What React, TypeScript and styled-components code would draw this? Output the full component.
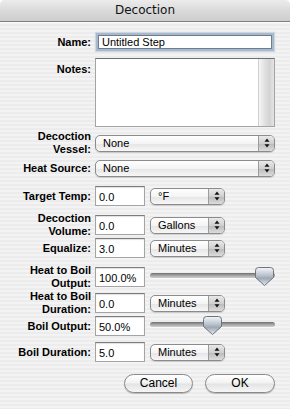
import React from 'react';
import styled, { createGlobalStyle } from 'styled-components';

const GlobalStyle = createGlobalStyle`
  html, body {
    margin: 0;
    padding: 0;
    background: #ffffff;
  }
  body {
    font-family: "Liberation Sans", Arial, sans-serif;
  }
  * {
    box-sizing: border-box;
  }
`;

const Window = styled.div`
  width: 290px;
  height: 409px;
  display: flex;
  flex-direction: column;
  overflow: hidden;
  border-radius: 5px 5px 0 0;
  background: repeating-linear-gradient(
    to bottom,
    #ececec 0px,
    #ececec 2px,
    #f3f3f3 2px,
    #f3f3f3 4px
  );
`;

const TitleBar = styled.div`
  flex: none;
  height: 22px;
  display: flex;
  align-items: center;
  justify-content: center;
  padding-bottom: 1px;
  background: linear-gradient(to bottom, #ececec 0%, #dadada 50%, #cecece 100%);
  border-bottom: 1px solid #7e7e7e;
  box-shadow: 0 1px 0 #fbfbfb;
  font-family: "DejaVu Sans", sans-serif;
  font-size: 12px;
  color: #111;
`;

const Form = styled.div`
  display: flex;
  flex-direction: column;
  padding-top: 9px;
`;

const Row = styled.div<{ $h: number; $mt: number; $top?: boolean }>`
  display: grid;
  grid-template-columns: 91px 180px;
  column-gap: 4px;
  height: ${({ $h }) => $h}px;
  margin-top: ${({ $mt }) => $mt}px;
  align-items: ${({ $top }) => ($top ? 'start' : 'center')};
`;

const Label = styled.label<{ $pt?: number }>`
  text-align: right;
  font-weight: bold;
  font-size: 11px;
  line-height: 13px;
  color: #000;
  padding-top: ${({ $pt }) => $pt || 0}px;
`;

const Controls = styled.div`
  display: flex;
  align-items: center;
  gap: 5px;
`;

const TextField = styled.input<{ $w?: number }>`
  width: ${({ $w }) => ($w ? `${$w}px` : '100%')};
  height: 20px;
  margin: 0;
  padding: 1px 3px 0;
  border: 1px solid #a4a4a4;
  border-top-color: #7c7c7c;
  background: #fff;
  box-shadow: inset 0 1px 1px rgba(0, 0, 0, 0.12);
  font-family: "Liberation Sans", Arial, sans-serif;
  font-size: 11px;
  color: #000;
  outline: none;
`;

const FocusField = styled(TextField)`
  width: calc(100% - 6px);
  height: 14px;
  margin: 3px;
  padding: 0 3px;
  border: 1px solid #6c7d92;
  box-shadow: 0 0 0 2px #a9b9cc, 0 0 1px 3px #cdd6e1;
`;

const NotesBox = styled.div`
  display: flex;
  height: 69px;
  border: 1px solid #a4a4a4;
  border-top-color: #6f6f6f;
  background: #fff;
`;

const NotesArea = styled.textarea`
  flex: 1;
  border: none;
  resize: none;
  outline: none;
  padding: 2px 3px;
  font-family: "Liberation Sans", Arial, sans-serif;
  font-size: 11px;
  background: transparent;
`;

const ScrollTrack = styled.div`
  width: 16px;
  border-left: 1px solid #d0d0d0;
  background: linear-gradient(to right, #f6f6f6 0%, #e2e2e2 35%, #d3d3d3 70%, #e4e4e4 100%);
`;

const Popup = styled.div<{ $w?: number }>`
  display: flex;
  width: ${({ $w }) => ($w ? `${$w}px` : '100%')};
  height: 17px;
  border: 1px solid #8b8b8b;
  border-radius: 5px;
  overflow: hidden;
  background: linear-gradient(to bottom, #ffffff 0%, #f4f4f4 50%, #e6e6e6 55%, #f7f7f7 100%);
  box-shadow: 0 1px 1px rgba(0, 0, 0, 0.15);
`;

const PopupText = styled.span`
  flex: 1;
  padding-left: 7px;
  font-size: 11px;
  line-height: 15px;
  color: #000;
  white-space: nowrap;
`;

const PopupArrows = styled.span`
  width: 16px;
  display: flex;
  align-items: center;
  justify-content: center;
  border-left: 1px solid #9c9c9c;
  background: linear-gradient(to bottom, #e9e9e9 0%, #cfcfcf 50%, #bcbcbc 55%, #dcdcdc 100%);
`;

const Slider = styled.div`
  position: relative;
  width: 125px;
  height: 20px;
`;

const Groove = styled.div`
  margin-top: 6px;
  height: 5px;
  border-radius: 3px;
  background: linear-gradient(to bottom, #6e6e6e 0%, #9b9b9b 40%, #cfcfcf 100%);
  box-shadow: 0 1px 0 #fafafa;
`;

const Thumb = styled.svg`
  position: absolute;
  top: 0;
`;

const ButtonBar = styled.div`
  display: flex;
  justify-content: flex-end;
  gap: 12px;
  padding-right: 15px;
  margin-top: 12px;
`;

const PushButton = styled.button<{ $w: number }>`
  width: ${({ $w }) => $w}px;
  height: 19px;
  padding: 0;
  border: 1px solid #8a8a8a;
  border-radius: 10px;
  background: linear-gradient(to bottom, #ffffff 0%, #f2f2f2 48%, #e3e3e3 52%, #f6f6f6 100%);
  box-shadow: 0 1px 1px rgba(0, 0, 0, 0.22);
  font-family: "Liberation Sans", Arial, sans-serif;
  font-size: 12px;
  line-height: 17px;
  color: #000;
`;

const Arrows = () => (
  <svg width="6" height="10" viewBox="0 0 6 10">
    <polygon points="3,0.5 5.5,3.8 0.5,3.8" fill="#111" />
    <polygon points="0.5,6.2 5.5,6.2 3,9.5" fill="#111" />
  </svg>
);

const PopupButton: React.FC<{ value: string; width?: number }> = ({ value, width }) => (
  <Popup $w={width}>
    <PopupText>{value}</PopupText>
    <PopupArrows>
      <Arrows />
    </PopupArrows>
  </Popup>
);

const OutputSlider: React.FC<{ value: number }> = ({ value }) => (
  <Slider>
    <Groove />
    <Thumb width="19" height="19" viewBox="0 0 19 19" style={{ left: 1 + value * 104 }}>
      <defs>
        <linearGradient id={`thumb${value}`} x1="0" y1="0" x2="0" y2="1">
          <stop offset="0" stopColor="#f6f8fa" />
          <stop offset="0.45" stopColor="#b7c0cb" />
          <stop offset="0.6" stopColor="#9ea8b4" />
          <stop offset="1" stopColor="#e6eaee" />
        </linearGradient>
      </defs>
      <path
        d="M3.5 0.5 H15.5 Q18.5 0.5 18.5 3.5 V10.5 L9.5 18.5 L0.5 10.5 V3.5 Q0.5 0.5 3.5 0.5 Z"
        fill={`url(#thumb${value})`}
        stroke="#6b737d"
      />
    </Thumb>
  </Slider>
);

export default function App() {
  return (
    <>
      <GlobalStyle />
      <Window>
        <TitleBar>Decoction</TitleBar>
        <Form>
          <Row $h={20} $mt={1}>
            <Label>Name:</Label>
            <FocusField defaultValue="Untitled Step" />
          </Row>
          <Row $h={69} $mt={6} $top>
            <Label $pt={5}>Notes:</Label>
            <NotesBox>
              <NotesArea />
              <ScrollTrack />
            </NotesBox>
          </Row>
          <Row $h={26} $mt={3}>
            <Label>
              Decoction
              <br />
              Vessel:
            </Label>
            <PopupButton value="None" />
          </Row>
          <Row $h={20} $mt={2}>
            <Label>Heat Source:</Label>
            <PopupButton value="None" />
          </Row>
          <Row $h={20} $mt={8}>
            <Label>Target Temp:</Label>
            <Controls>
              <TextField $w={50} defaultValue="0.0" />
              <PopupButton value="°F" width={75} />
            </Controls>
          </Row>
          <Row $h={20} $mt={6}>
            <Label>
              Decoction
              <br />
              Volume:
            </Label>
            <Controls>
              <TextField $w={50} defaultValue="0.0" />
              <PopupButton value="Gallons" width={75} />
            </Controls>
          </Row>
          <Row $h={20} $mt={6}>
            <Label>Equalize:</Label>
            <Controls>
              <TextField $w={50} defaultValue="3.0" />
              <PopupButton value="Minutes" width={75} />
            </Controls>
          </Row>
          <Row $h={20} $mt={6}>
            <Label>
              Heat to Boil
              <br />
              Output:
            </Label>
            <Controls>
              <TextField $w={50} defaultValue="100.0%" />
              <OutputSlider value={1} />
            </Controls>
          </Row>
          <Row $h={20} $mt={6}>
            <Label>
              Heat to Boil
              <br />
              Duration:
            </Label>
            <Controls>
              <TextField $w={50} defaultValue="0.0" />
              <PopupButton value="Minutes" width={75} />
            </Controls>
          </Row>
          <Row $h={20} $mt={6}>
            <Label>Boil Output:</Label>
            <Controls>
              <TextField $w={50} defaultValue="50.0%" />
              <OutputSlider value={0.5} />
            </Controls>
          </Row>
          <Row $h={20} $mt={6}>
            <Label>Boil Duration:</Label>
            <Controls>
              <TextField $w={50} defaultValue="5.0" />
              <PopupButton value="Minutes" width={75} />
            </Controls>
          </Row>
          <ButtonBar>
            <PushButton $w={69}>Cancel</PushButton>
            <PushButton $w={70}>OK</PushButton>
          </ButtonBar>
        </Form>
      </Window>
    </>
  );
}
